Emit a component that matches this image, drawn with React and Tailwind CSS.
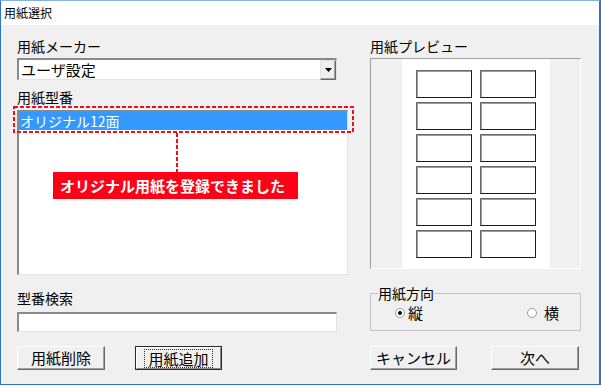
import React from "react";

function Sunken({ className = "", children }) {
  return (
    <div
      className={`bg-white border-t-2 border-l-2 border-t-[#8a8a8a] border-l-[#8a8a8a] border-b border-r border-b-[#e3e3e3] border-r-[#e3e3e3] ${className}`}
    >
      {children}
    </div>
  );
}

function Btn({ children, w, isDefault }) {
  if (isDefault) {
    return (
      <div className={`${w} h-[24px] flex border border-[#2a2a2a]`}>
        <div className="flex-1 flex items-center justify-center bg-[#f0f0f0] border border-t-white border-l-white border-r-[#8a8a8a] border-b-[#8a8a8a]">
          <span className="border border-dotted border-[#333] px-[3px] leading-[17px] text-[15px]">{children}</span>
        </div>
      </div>
    );
  }
  return (
    <div
      className={`${w} h-[24px] flex items-center justify-center bg-[#f0f0f0] border border-t-white border-l-white border-r-[#696969] border-b-[#696969] shadow-[inset_-1px_-1px_0_#a0a0a0] text-[15px] leading-[18px]`}
    >
      {children}
    </div>
  );
}

function Radio({ label, checked, gap }) {
  return (
    <div className={`flex items-center ${gap}`}>
      <div className="w-[10px] h-[10px] rounded-full bg-white border border-[#9a9a9a] flex items-center justify-center">
        {checked && <div className="w-[4px] h-[4px] rounded-full bg-black" />}
      </div>
      <span className="text-[15px] leading-[18px]">{label}</span>
    </div>
  );
}

export default function App() {
  const cells = Array.from({ length: 12 });

  return (
    <div className="w-[601px] h-[386px] bg-white font-['Noto_Sans_CJK_JP','Noto_Sans',sans-serif] text-black">
      <div className="w-[601px] h-[385px] flex flex-col border-t border-t-[#86b4de] border-l border-l-[#2a78c2] border-r-2 border-r-[#2a78c2] border-b border-b-[#2a78c2]">
        {/* title bar */}
        <div className="h-[24px] bg-white flex items-center pl-[3px] text-[12px] leading-[16px]">用紙選択</div>

        {/* body */}
        <div className="flex-1 bg-[#f0f0f0] flex pl-[16px] pt-[12px] gap-[22px]">
          {/* left column */}
          <div className="w-[331px] flex flex-col">
            <div className="text-[14px] leading-[18px] h-[18px]">用紙メーカー</div>
            <Sunken className="mt-[3px] w-[320px] h-[22px] flex items-center">
              <span className="flex-1 pl-[2px] text-[15px] leading-[18px]">ユーザ設定</span>
              <div className="w-[16px] h-[20px] bg-[#f0f0f0] border border-t-[#e3e3e3] border-l-[#e3e3e3] border-r-[#696969] border-b-[#696969] shadow-[inset_-1px_-1px_0_#a0a0a0] flex items-center justify-center">
                <svg width="7" height="4" viewBox="0 0 7 4">
                  <path d="M0 0H7L3.5 4Z" fill="#000" />
                </svg>
              </div>
            </Sunken>

            <div className="mt-[8px] text-[14px] leading-[18px] h-[18px]">用紙型番</div>

            <div className="relative mt-[4px] w-[331px] h-[165px] bg-white border-t-2 border-l-2 border-t-[#8a8a8a] border-l-[#8a8a8a] border-b border-r border-b-[#e3e3e3] border-r-[#e3e3e3]">
              <div className="h-[18px] bg-[#3399ff] text-white text-[14px] leading-[18px] pl-[1px]">オリジナル12面</div>

              <svg className="absolute left-[-6px] top-[-6px]" width="343" height="68" viewBox="0 0 343 68">
                <rect x="1" y="1" width="339" height="25" fill="none" stroke="#f20d1b" strokeWidth="2" strokeDasharray="4 2" />
                <line x1="164" y1="27" x2="164" y2="68" stroke="#f20d1b" strokeWidth="2" strokeDasharray="4 2" />
              </svg>

              <div className="absolute left-[34px] top-[60px] w-[245px] h-[27px] bg-[#ff0016] flex items-center pl-[7px] text-white font-bold text-[15px] leading-[18px]">
                オリジナル用紙を登録できました
              </div>
            </div>

            <div className="mt-[14px] text-[14px] leading-[18px] h-[18px]">型番検索</div>
            <Sunken className="mt-[5px] w-[320px] h-[20px]" />

            <div className="mt-[14px] flex gap-[30px]">
              <Btn w="w-[88px]">用紙削除</Btn>
              <Btn w="w-[87px]" isDefault>用紙追加</Btn>
            </div>
          </div>

          {/* right column */}
          <div className="w-[211px] flex flex-col">
            <div className="text-[14px] leading-[18px] h-[18px]">用紙プレビュー</div>
            <div className="mt-[3px] h-[211px] border-t border-l border-t-[#a0a0a0] border-l-[#a0a0a0] border-b border-r border-b-white border-r-white flex justify-center">
              <div className="w-[148px] bg-white px-[14px] pt-[11px]">
                <div className="grid grid-cols-2 gap-x-[8px] gap-y-[4px]">
                  {cells.map((_, i) => (
                    <div
                      key={i}
                      className="h-[28px] bg-white border border-t-[#6a6a6a] border-l-[#6a6a6a] border-r-[#1a1a1a] border-b-[#1a1a1a] shadow-[inset_1px_1px_0_#9a9a9a]"
                    />
                  ))}
                </div>
              </div>
            </div>

            <fieldset className="mt-[15px] h-[47px] border border-[#c4c4c4]">
              <legend className="ml-[7px] text-[14px] leading-[18px]">用紙方向</legend>
              <div className="mt-[2px] flex justify-between pl-[24px] pr-[21px]">
                <Radio label="縦" checked gap="gap-[3px]" />
                <Radio label="横" gap="gap-[7px]" />
              </div>
            </fieldset>

            <div className="mt-[15px] flex justify-between pr-[2px]">
              <Btn w="w-[87px]">キャンセル</Btn>
              <Btn w="w-[88px]">次へ</Btn>
            </div>
          </div>
        </div>
      </div>
    </div>
  );
}
